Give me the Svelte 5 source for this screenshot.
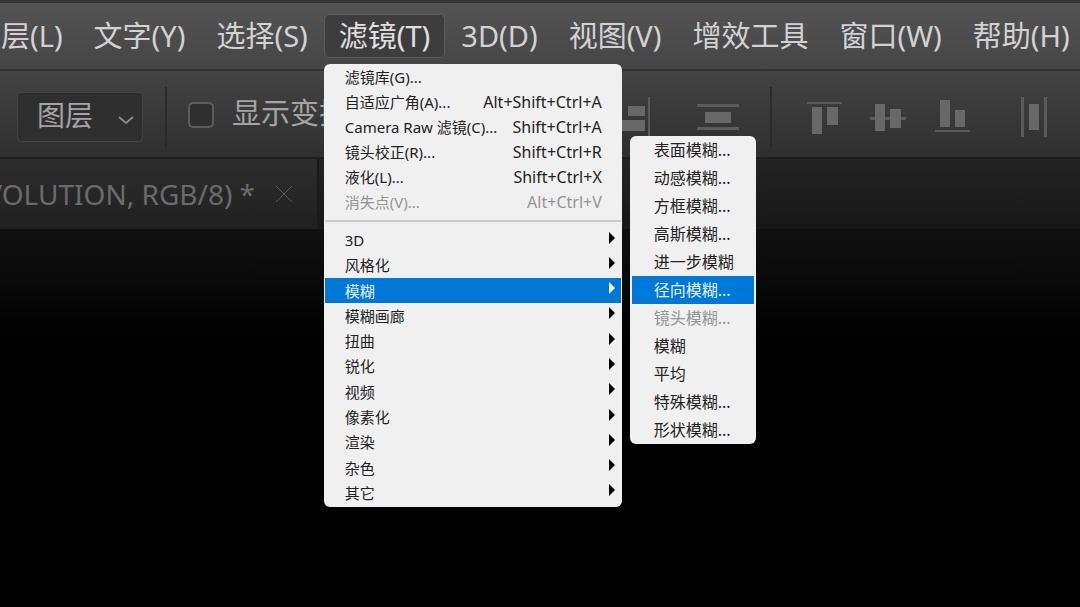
<script>
    const menus = ['图层(L)', '文字(Y)', '选择(S)', '滤镜(T)', '3D(D)', '视图(V)', '增效工具', '窗口(W)', '帮助(H)'];

    const filters = [
        { label: '滤镜库(G)...' },
        { label: '自适应广角(A)...', keys: 'Alt+Shift+Ctrl+A' },
        { label: 'Camera Raw 滤镜(C)...', keys: 'Shift+Ctrl+A' },
        { label: '镜头校正(R)...', keys: 'Shift+Ctrl+R' },
        { label: '液化(L)...', keys: 'Shift+Ctrl+X' },
        { label: '消失点(V)...', keys: 'Alt+Ctrl+V', disabled: true }
    ];

    const groups = ['3D', '风格化', '模糊', '模糊画廊', '扭曲', '锐化', '视频', '像素化', '渲染', '杂色', '其它'];

    const blurs = [
        { label: '表面模糊...' },
        { label: '动感模糊...' },
        { label: '方框模糊...' },
        { label: '高斯模糊...' },
        { label: '进一步模糊' },
        { label: '径向模糊...' },
        { label: '镜头模糊...', disabled: true },
        { label: '模糊' },
        { label: '平均' },
        { label: '特殊模糊...' },
        { label: '形状模糊...' }
    ];

    // Align buttons: [x, y, width, height] of each bar, thin ones are guide lines
    const alignX = [
        { name: '左对齐', bars: [[1, 1, 2, 40], [6, 10, 17, 10], [6, 24, 28, 11]] },
        { name: '水平居中对齐', bars: [[17, 1, 2, 40], [9, 10, 18, 10], [4, 24, 28, 11]] },
        { name: '右对齐', bars: [[33, 1, 2, 40], [13, 10, 17, 10], [2, 24, 28, 11]] }
    ];
    const alignY = [
        { name: '顶对齐', bars: [[1, 6, 35, 2], [6, 11, 10, 27], [21, 11, 11, 18]] },
        { name: '垂直居中对齐', bars: [[0, 21, 36, 3], [5, 8, 10, 27], [20, 13, 11, 19]] },
        { name: '底对齐', bars: [[1, 34, 35, 2], [6, 4, 10, 27], [21, 14, 10, 17]] }
    ];
    const spreadY = { name: '垂直分布', width: 42, bars: [[0, 8, 42, 3], [8, 16, 26, 11], [0, 31, 42, 3]] };
    const spreadX = { name: '水平分布', width: 28, bars: [[1, 1, 3, 40], [9, 8, 10, 26], [24, 1, 3, 40]] };

    let openMenu = $state('滤镜(T)');
    let openGroup = $state('模糊');
    let activeBlur = $state('径向模糊...');
    let showTransform = $state(false);
</script>

{#snippet tool(icon)}
    <button class="tool" aria-label={icon.name}>
        <svg width={icon.width ?? 36} height="42">
            {#each icon.bars as [x, y, w, h]}
                <rect {x} {y} width={w} height={h} class:line={w < 4 || h < 4} />
            {/each}
        </svg>
    </button>
{/snippet}

<div class="app">
    <nav class="menubar">
        {#each menus as menu}
            <div class="slot">
                <button class="menu" class:open={openMenu === menu} onclick={() => (openMenu = menu)}>{menu}</button>
                {#if menu === '滤镜(T)' && openMenu === menu}
                    <div class="popup">
                        <ul class="list top">
                            {#each filters as item}
                                <li>
                                    <button class="item" disabled={item.disabled}>
                                        <span>{item.label}</span>
                                        <span class="keys">{item.keys ?? ''}</span>
                                    </button>
                                </li>
                            {/each}
                        </ul>
                        <hr />
                        <ul class="list groups">
                            {#each groups as group}
                                <li>
                                    <button class="item" class:active={openGroup === group} onclick={() => (openGroup = group)}>
                                        <span>{group}</span>
                                        <svg class="arrow" width="6" height="12"><path d="M0 0L6 6L0 12Z" /></svg>
                                    </button>
                                </li>
                            {/each}
                        </ul>
                        {#if openGroup === '模糊'}
                            <ul class="list submenu">
                                {#each blurs as blur}
                                    <li>
                                        <button
                                            class="item"
                                            class:active={activeBlur === blur.label}
                                            disabled={blur.disabled}
                                            onclick={() => (activeBlur = blur.label)}>{blur.label}</button>
                                    </li>
                                {/each}
                            </ul>
                        {/if}
                    </div>
                {/if}
            </div>
        {/each}
    </nav>

    <div class="options">
        <div class="select">
            <select aria-label="自动选择">
                <option>图层</option>
                <option>组</option>
            </select>
            <svg class="chevron" width="18" height="10"><path d="M2 2L9 8L16 2" /></svg>
        </div>
        <span class="divider"></span>
        <label class="check">
            <input type="checkbox" bind:checked={showTransform} />
            <span>显示变换控件</span>
        </label>
        <span class="divider wide"></span>
        <div class="tools">
            {#each alignX as icon}
                {@render tool(icon)}
            {/each}
        </div>
        <div class="spread">{@render tool(spreadY)}</div>
        <span class="divider far"></span>
        <div class="tools">
            {#each alignY as icon}
                {@render tool(icon)}
            {/each}
        </div>
        <div class="spread end">{@render tool(spreadX)}</div>
    </div>

    <div class="tabs">
        <div class="tab">
            <span>REVOLUTION, RGB/8) *</span>
            <button class="close" aria-label="关闭">
                <svg width="18" height="18"><path d="M1 1L17 17M17 1L1 17" /></svg>
            </button>
        </div>
    </div>

    <main class="canvas"></main>
</div>

<style>
    :global(body) {
        background: #000;
        overflow: hidden;
    }

    .app {
        display: flex;
        flex-direction: column;
        min-height: 100vh;
        font-family: 'Noto Sans', 'Noto Sans CJK SC', sans-serif;
        font-size: 29px;
        white-space: nowrap;
    }

    button,
    select {
        font: inherit;
        color: inherit;
        background: none;
        border: 0;
        padding: 0;
        margin: 0;
    }

    svg {
        display: block;
    }

    /* Menu bar */
    .menubar {
        display: flex;
        align-items: center;
        gap: 1px;
        height: 66px;
        margin-left: -43px;
        border-top: 3px solid #363636;
        border-bottom: 2px solid #303030;
        background: linear-gradient(#545454, #454545);
        color: #d2d2d2;
    }

    .slot {
        position: relative;
    }

    .menu {
        display: block;
        height: 44px;
        padding: 0 14px;
        border: 1px solid transparent;
        border-radius: 5px;
        line-height: 42px;
    }

    .menu.open {
        background: #3d3d3d;
        border-color: #5c5c5c;
        color: #e0e0e0;
    }

    /* Drop-down */
    .popup {
        position: absolute;
        top: 50px;
        left: 0;
        z-index: 10;
        width: 296px;
        padding: 1px 1px 2px;
        border-radius: 6px;
        background: #f0f0f0;
        color: #222;
        font-size: 15px;
    }

    .list {
        display: grid;
        grid-auto-rows: 1fr;
        margin: 0;
        padding: 0;
        list-style: none;
    }

    .top {
        min-height: 150px;
    }

    .groups {
        min-height: 278px;
    }

    .item {
        display: flex;
        justify-content: space-between;
        align-items: center;
        width: 100%;
        height: 100%;
        padding: 0 19px 0 20px;
        line-height: 23px;
        text-align: left;
    }

    .item:disabled {
        color: #949494;
    }

    .item.active {
        background: #0078d7;
        color: #e6f3ff;
    }

    .keys {
        font-size: 16px;
    }

    .groups .item {
        padding-top: 2px;
        padding-right: 6px;
    }

    .arrow {
        margin-bottom: 6px;
        fill: #000;
    }

    .active .arrow {
        fill: #fff;
    }

    hr {
        height: 2px;
        margin: 5px 0;
        border: 0;
        background: #c9c9c9;
    }

    .submenu {
        position: absolute;
        top: 72px;
        left: 306px;
        width: 122px;
        padding: 0 2px;
        border-radius: 6px;
        background: #f0f0f0;
        font-size: 16px;
    }

    .submenu .item {
        padding: 0 0 0 22px;
        line-height: 28px;
    }

    /* Options bar */
    .options {
        display: flex;
        align-items: center;
        height: 80px;
        padding: 6px 0 0 17px;
        border-bottom: 2px solid #1e1e1e;
        background: linear-gradient(#434343, #2f2f2f);
        color: #a4a4a4;
    }

    .select {
        display: grid;
        align-items: center;
    }

    select {
        grid-area: 1 / 1;
        appearance: none;
        width: 126px;
        height: 50px;
        padding: 0 0 4px 19px;
        border: 1px solid #444;
        border-radius: 4px;
        background: #2f2f2f;
        font-size: 28px;
    }

    .chevron {
        grid-area: 1 / 1;
        justify-self: end;
        margin: 6px 8px 0 0;
        fill: none;
        stroke: #8a8a8a;
        stroke-width: 2;
        pointer-events: none;
    }

    .divider {
        flex: none;
        width: 2px;
        height: 60px;
        margin: 0 21px 0 22px;
        background: #2b2b2b;
    }

    .divider.wide {
        margin: 0 40px 0 113px;
    }

    .divider.far {
        margin: 0 34px 0 31px;
    }

    .check {
        display: flex;
        align-items: center;
        gap: 18px;
        line-height: 42px;
        padding-bottom: 4px;
    }

    .check span {
        width: 100px;
        padding-bottom: 4px;
        overflow: hidden;
    }

    .check input {
        appearance: none;
        width: 26px;
        height: 26px;
        margin: 0;
        border: 2px solid #5c5c5c;
        border-radius: 5px;
        background: #303030;
    }

    .check input:checked {
        background: #8a8a8a;
    }

    .tools {
        display: flex;
        gap: 28px;
    }

    .spread {
        display: flex;
        margin-left: 46px;
    }

    .spread.end {
        margin-left: 50px;
    }

    .tool {
        fill: #686868;
    }

    .tool .line {
        fill: #5a5a5a;
    }

    /* Document tabs */
    .tabs {
        display: flex;
        height: 70px;
        background: linear-gradient(#242424, #171717);
        color: #6b6b6b;
        font-size: 28px;
    }

    .tab {
        display: flex;
        justify-content: flex-end;
        align-items: center;
        gap: 20px;
        width: 293px;
        padding-right: 24px;
        border-right: 2px solid #1a1a1a;
        background: linear-gradient(#2d2d2d, #202020);
    }

    .close svg {
        fill: none;
        stroke: #5a5a5a;
        stroke-width: 1;
    }

    .canvas {
        flex: 1;
        background: linear-gradient(#101010, #000 120px);
    }
</style>
